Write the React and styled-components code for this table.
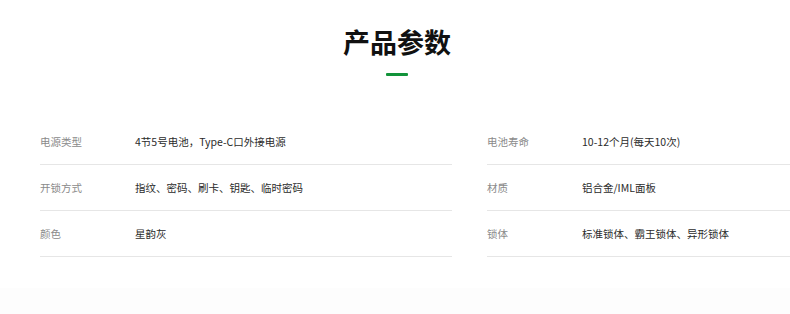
import React from "react"
import styled, { createGlobalStyle } from "styled-components"

const GlobalStyle = createGlobalStyle`
  html, body {
    margin: 0;
    padding: 0;
    background: #ffffff;
    font-family: "Noto Sans CJK SC", "Noto Sans", "Liberation Sans", sans-serif;
  }
`

const Page = styled.div`
  width: 790px;
  height: 314px;
  overflow: hidden;
  display: flex;
  flex-direction: column;
`

const Header = styled.div`
  display: flex;
  flex-direction: column;
  align-items: center;
  padding-top: 24px;
  padding-left: 4px;
`

const Title = styled.h2`
  margin: 0;
  font-size: 27px;
  line-height: 36px;
  font-weight: 700;
  color: #111;
`

const Underline = styled.span`
  display: block;
  width: 22px;
  height: 3px;
  margin-top: 13px;
  border-radius: 1px;
  background: #12933a;
`

const Table = styled.div`
  display: grid;
  grid-template-columns: 412px 412px;
  column-gap: 35px;
  padding-left: 40px;
  margin-top: 43px;
`

const Column = styled.div`
  display: flex;
  flex-direction: column;
`

const Row = styled.div`
  display: flex;
  align-items: center;
  height: 45px;
  border-bottom: 1px solid #e6e6e6;
  font-size: 10.5px;
`

const Label = styled.span`
  width: 95px;
  flex-shrink: 0;
  color: #8a8a8a;
`

const Value = styled.span`
  color: #2b2b2b;
`

const Footer = styled.div`
  flex: 1;
  margin-top: 31px;
  background: #fdfdfd;
`

const left = [
  ["电源类型", "4节5号电池，Type-C口外接电源"],
  ["开锁方式", "指纹、密码、刷卡、钥匙、临时密码"],
  ["颜色", "星韵灰"],
]

const right = [
  ["电池寿命", "10-12个月(每天10次)"],
  ["材质", "铝合金/IML面板"],
  ["锁体", "标准锁体、霸王锁体、异形锁体"],
]

const Specs = ({ items }) => (
  <Column>
    {items.map(([k, v]) => (
      <Row key={k}>
        <Label>{k}</Label>
        <Value>{v}</Value>
      </Row>
    ))}
  </Column>
)

const App = () => (
  <>
    <GlobalStyle />
    <Page>
      <Header>
        <Title>产品参数</Title>
        <Underline />
      </Header>
      <Table>
        <Specs items={left} />
        <Specs items={right} />
      </Table>
      <Footer />
    </Page>
  </>
)

export default App
